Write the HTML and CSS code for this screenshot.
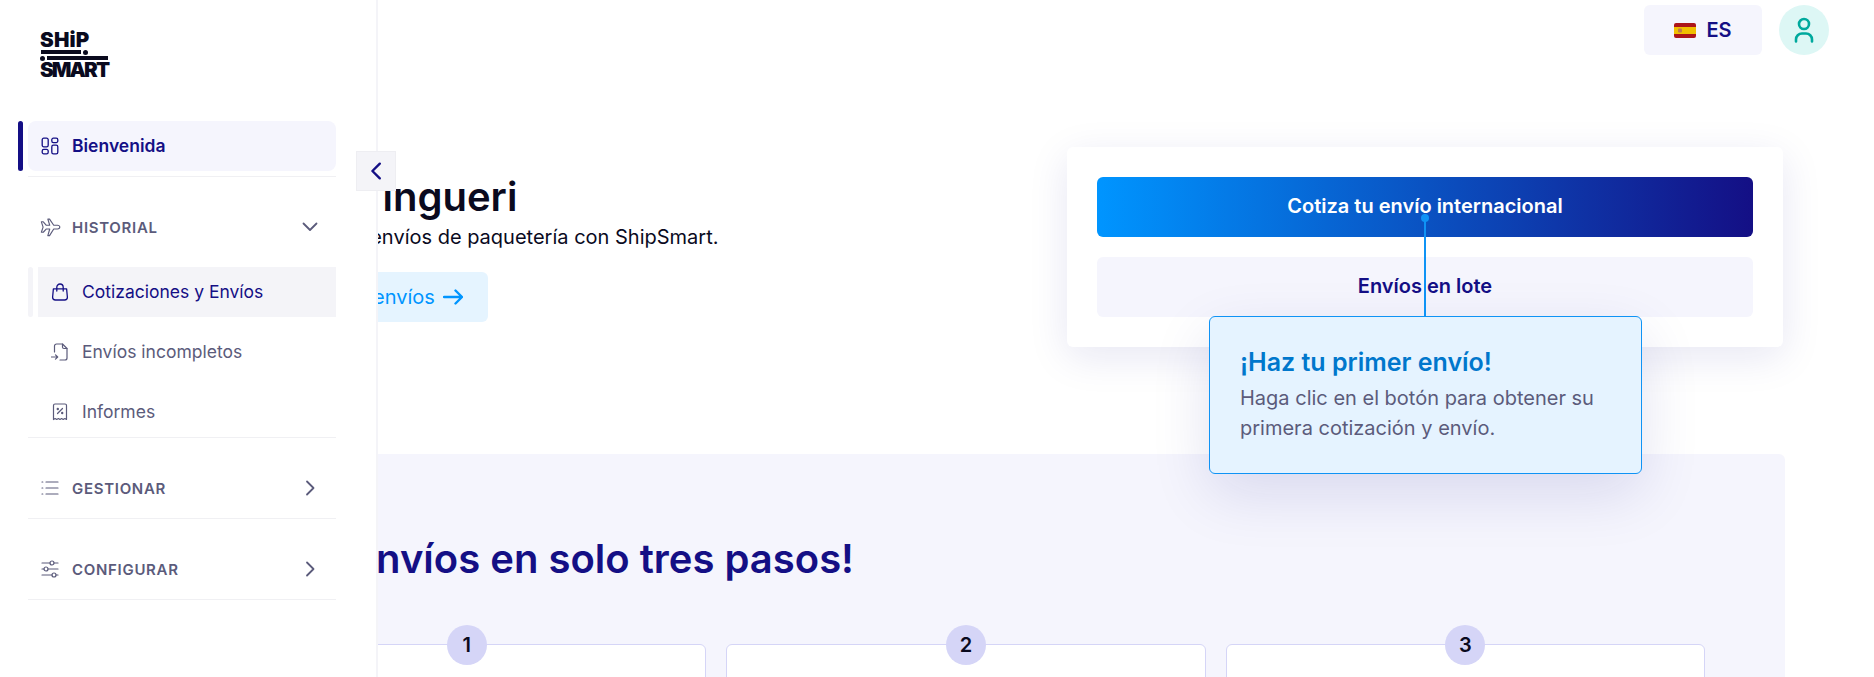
FILE: index.html
```html
<!DOCTYPE html>
<html lang="es">
<head>
<meta charset="utf-8">
<title>ShipSmart</title>
<link rel="stylesheet" href="styles.css">
</head>
<body>
<aside class="sidebar">
  <div class="logo">
    <span class="logo-word">SHiP</span>
    <div class="logo-rule logo-rule-top"><i class="bar"></i><i class="dot"></i></div>
    <div class="logo-rule logo-rule-bottom"><i class="dot"></i><i class="bar"></i></div>
    <span class="logo-word logo-word-wide">SMART</span>
  </div>
  <nav class="nav">
    <div class="row-top">
      <span class="marker marker-navy"></span>
      <a class="item item-home">
        <svg class="ico" viewBox="0 0 18 18" fill="none" stroke="currentColor" stroke-width="1.3"><rect x="1.2" y="1.2" width="6" height="8.6" rx="1.6"/><rect x="1.2" y="12.4" width="6" height="4.4" rx="1.6"/><rect x="10.8" y="1.2" width="6" height="4.4" rx="1.6"/><rect x="10.8" y="8.2" width="6" height="8.6" rx="1.6"/></svg>
        <span>Bienvenida</span>
      </a>
    </div>
    <section class="group group-open">
      <div class="group-head">
        <svg class="ico-wide" viewBox="0 0 22 20" fill="none" stroke="currentColor" stroke-width="1.2" stroke-linejoin="round" stroke-linecap="round"><path d="M20.8 9.600c0-1-1-2-2.400-2h-4L10 1.200H8.200l2 6.400H6.400L3.400 4h-2l1.800 5.600L1.400 15h2l3-3.400h3.800l-2 7h1.800l4.400-7h4c1.400 0 2.400-.8 2.400-2z"/></svg>
        <span class="group-label">HISTORIAL</span>
        <svg class="chev" viewBox="0 0 16 16" fill="none" stroke="currentColor" stroke-width="1.800" stroke-linecap="round" stroke-linejoin="round"><path d="M1.500 4.500 8 11l6.500-6.500"/></svg>
      </div>
      <div class="sub">
        <div class="row-sub">
          <span class="marker marker-soft"></span>
          <a class="item item-current">
            <svg class="ico" viewBox="0 0 18 18" fill="none" stroke="currentColor" stroke-width="1.300" stroke-linecap="round" stroke-linejoin="round"><path d="M2.400 5.800h13.200l.8 8.400a2.800 2.800 0 0 1-2.800 2.800H4.400a2.800 2.800 0 0 1-2.800-2.800z"/><path d="M5.800 8V4.200a3.200 3.200 0 0 1 6.400 0V8"/></svg>
            <span>Cotizaciones y Envíos</span>
          </a>
        </div>
        <a class="item item-plain">
          <svg class="ico" viewBox="0 0 18 18" fill="none" stroke="currentColor" stroke-width="1.200" stroke-linecap="round" stroke-linejoin="round"><path d="M3.500 9V3a2 2 0 0 1 2-2h6l4.500 4.500V15a2 2 0 0 1-2 2H9"/><path d="M11.500 1v3a1.500 1.500 0 0 0 1.500 1.500h3"/><path d="M.5 14h6M4.500 11.800 6.700 14l-2.200 2.200"/></svg>
          <span>Envíos incompletos</span>
        </a>
        <a class="item item-plain">
          <svg class="ico" viewBox="0 0 18 18" fill="none" stroke="currentColor" stroke-width="1.200" stroke-linecap="round" stroke-linejoin="round"><path d="M2.500 16.500V2.500a1.500 1.500 0 0 1 1.500-1.500h10a1.500 1.500 0 0 1 1.500 1.500v14l-1.600-1-1.700 1-1.600-1-1.600 1-1.600-1-1.700 1-1.600-1z"/><path d="m6.500 10.500 5-5"/><circle cx="6.800" cy="6" r=".6"/><circle cx="11.200" cy="10" r=".6"/></svg>
          <span>Informes</span>
        </a>
      </div>
    </section>
    <section class="group">
      <div class="group-head">
        <svg class="ico" viewBox="0 0 18 18" fill="none" stroke="currentColor" stroke-width="1.200" stroke-linecap="round"><path d="M5 3h12M5 9h12M5 15h12"/><path d="M1 3h.8M1 9h.8M1 15h.8"/></svg>
        <span class="group-label">GESTIONAR</span>
        <svg class="chev" viewBox="0 0 16 16" fill="none" stroke="currentColor" stroke-width="1.800" stroke-linecap="round" stroke-linejoin="round"><path d="m5 1.500 6.500 6.500L5 14.500"/></svg>
      </div>
    </section>
    <section class="group">
      <div class="group-head">
        <svg class="ico" viewBox="0 0 18 18" fill="none" stroke="currentColor" stroke-width="1.200" stroke-linecap="round"><path d="M1 3h8M13 3h4M1 9h2M7 9h10M1 15h10M15 15h2"/><circle cx="11" cy="3" r="2"/><circle cx="5" cy="9" r="2"/><circle cx="13" cy="15" r="2"/></svg>
        <span class="group-label">CONFIGURAR</span>
        <svg class="chev" viewBox="0 0 16 16" fill="none" stroke="currentColor" stroke-width="1.800" stroke-linecap="round" stroke-linejoin="round"><path d="m5 1.500 6.500 6.500L5 14.500"/></svg>
      </div>
    </section>
  </nav>
  <button class="collapse" type="button" aria-label="Contraer">
    <svg viewBox="0 0 12 18" width="12" height="18" fill="none" stroke="currentColor" stroke-width="2.400" stroke-linecap="round" stroke-linejoin="round"><path d="M9.800 1.700 2.400 9l7.400 7.300"/></svg>
  </button>
</aside>

<div class="page">
  <header class="topbar">
    <button class="lang" type="button">
      <svg class="flag" viewBox="0 0 22 15"><rect width="22" height="15" rx="2" fill="#ad1519"/><rect y="4" width="22" height="7" fill="#f1bf00"/><rect x="4" y="5.500" width="4" height="4" rx="1" fill="#c1794a"/></svg>
      <span>ES</span>
    </button>
    <span class="avatar">
      <svg viewBox="0 0 20 26" width="20" height="26" fill="none" stroke="currentColor" stroke-width="2.600" stroke-linecap="round"><circle cx="10" cy="7" r="5"/><path d="M2 24.500v-2a6 6 0 0 1 6-6h4a6 6 0 0 1 6 6v2"/></svg>
    </span>
  </header>

  <main class="content">
    <section class="hero">
      <div class="hero-text">
        <h1 class="hero-title">¡Hola, Ana Tingueri</h1>
        <p class="hero-sub">Realiza y gestiona tus envíos de paquetería con ShipSmart.</p>
        <a class="hero-link">Ver historial de envíos
          <svg viewBox="0 0 20 16" width="20" height="16" fill="none" stroke="currentColor" stroke-width="2.400" stroke-linecap="round" stroke-linejoin="round"><path d="M1 8h18M12.500 1.500 19 8l-6.500 6.500"/></svg>
        </a>
      </div>
      <div class="quote-card">
        <a class="btn btn-primary">Cotiza tu envío internacional</a>
        <a class="btn btn-soft">Envíos en lote</a>
        <div class="tip">
          <i class="tip-line"></i>
          <h3 class="tip-title">¡Haz tu primer envío!</h3>
          <p class="tip-text">Haga clic en el botón para obtener su primera cotización y envío.</p>
        </div>
      </div>
    </section>
    <section class="steps">
      <h2 class="steps-title">¡Crea envíos en solo tres pasos!</h2>
      <div class="steps-grid">
        <div class="step"><span class="step-num">1</span></div>
        <div class="step"><span class="step-num">2</span></div>
        <div class="step"><span class="step-num">3</span></div>
      </div>
    </section>
  </main>
</div>
</body>
</html>
```
FILE: styles.css
```css
* { box-sizing: border-box; }
html, body { margin: 0; height: 677px; overflow: hidden; background: #fff; }
body { font-family: Inter, "Liberation Sans", sans-serif; color: #0a0a1e; position: relative; }
a { text-decoration: none; }
button { font-family: inherit; border: 0; padding: 0; }

/* Sidebar overlays the page */
.sidebar {
  position: absolute; left: 0; top: 0; z-index: 5;
  width: 378px; height: 677px;
  background: #fff; border-right: 2px solid #f4f4f8;
  padding: 32px 40px 0 18px;
}
.logo { margin-left: 22px; width: 68px; height: 89px; display: flex; flex-direction: column; color: #0a0a1e; }
.logo-word { font-weight: 900; font-size: 20.6px; line-height: 16px; height: 16px; letter-spacing: .2px; white-space: nowrap; }
.logo-word-wide { letter-spacing: -1.9px; margin-top: 2px; }
.logo-rule { display: flex; align-items: center; height: 4px; gap: 2px; margin-top: 2px; }
.logo-rule-top { margin-left: 1px; width: 47px; }
.logo-rule .bar { flex: 1; height: 4px; background: #0a0a1e; }
.logo-rule .dot { width: 5px; height: 5px; border-radius: 50%; background: #0a0a1e; }

.nav { display: flex; flex-direction: column; }
.row-top { display: flex; gap: 5px; height: 50px; }
.row-sub { display: flex; gap: 5px; height: 50px; }
.marker { width: 5px; border-radius: 3px; flex: none; }
.marker-navy { background: #140f85; }
.marker-soft { background: #f4f4f8; }
.item { display: flex; align-items: center; flex: 1; height: 50px; font-size: 17.5px; gap: 13px; padding-left: 13px; }
.item span { margin-bottom: 2px; }
.item-home { background: #f5f5fd; color: #140f85; border-radius: 8px; font-weight: 600; }
.item-current { background: #f4f4f8; color: #140f85; }
.item-plain { color: #5b5b7b; padding-left: 23px; flex: none; }
.ico { width: 18px; height: 18px; flex: none; }

.group { margin-left: 10px; padding: 25px 0 5px; border-bottom: 1px solid #f0f0f3; }
.group-open { margin-top: 5px; border-top: 1px solid #f0f0f3; padding-bottom: 0; }
.group-head { display: flex; align-items: center; height: 50px; color: #5b5b7b; padding-left: 13px; }
.group-head .ico { margin-right: 13px; }
.ico-wide { width: 21px; height: 19px; margin-left: -1px; margin-right: 11px; flex: none; }
.group-label { font-size: 15px; font-weight: 600; letter-spacing: .7px; flex: 1; }
.chev { width: 16px; height: 16px; margin-right: 18px; flex: none; }
.sub { display: flex; flex-direction: column; gap: 10px; margin-top: 15px; }

.collapse {
  position: absolute; left: 356px; top: 151px;
  width: 40px; height: 40px;
  display: flex; align-items: center; justify-content: center;
  background: #f4f4f8; border: 1px solid #eeeef2; color: #140f85;
}

/* Page */
.page { display: flex; flex-direction: column; height: 677px; overflow: hidden; }
.topbar { display: flex; justify-content: flex-end; align-items: center; gap: 17px; padding: 5px 45px 0 0; height: 55px; flex: none; }
.lang { width: 118px; height: 50px; background: #f5f5fd; border-radius: 6px; display: flex; align-items: center; justify-content: center; gap: 10px; color: #140f85; font-size: 20px; font-weight: 600; }
.flag { width: 22px; height: 15px; }
.avatar { width: 50px; height: 50px; border-radius: 50%; background: #ddf7f5; color: #00a99d; display: flex; align-items: center; justify-content: center; }

.content { padding: 0 89px 0 148px; flex: 1; }
.hero { display: flex; justify-content: space-between; margin: 92px 2px 0 0; height: 200px; }
.hero-text { padding-top: 26px; }
.hero-title { margin: 0 0 0 -1px; font-size: 40px; line-height: 48px; font-weight: 600; color: #0a0a1e; white-space: nowrap; }
.hero-sub { margin: 2px 0 0 11px; font-size: 20px; line-height: 28px; color: #0a0a1e; white-space: nowrap; }
.hero-link { display: flex; width: fit-content; align-items: center; gap: 8px; height: 50px; margin-top: 21px; padding: 0 25px 0 78px; background: #e5f4ff; border-radius: 6px; color: #0095ff; font-size: 20px; white-space: nowrap; }

.quote-card { position: relative; width: 716px; height: 200px; background: #fff; border-radius: 6px; padding: 30px; display: flex; flex-direction: column; gap: 20px; box-shadow: 0 10px 40px rgba(20, 15, 133, .1); }
.btn { height: 60px; border-radius: 6px; display: flex; align-items: center; justify-content: center; font-size: 20px; font-weight: 600; padding-bottom: 2px; }
.btn-primary { background: linear-gradient(90deg, #0095ff, #140f85); color: #fff; }
.btn-soft { background: #f5f5fd; color: #140f85; }

.tip { position: absolute; left: 142px; top: 169px; width: 433px; height: 158px; padding: 29px 30px; background: #e5f3ff; border: 1px solid #0f93f5; border-radius: 6px; box-shadow: 0 20px 60px rgba(20, 15, 133, .12); z-index: 2; }
.tip-line { position: absolute; left: 214px; top: -103px; width: 2px; height: 103px; background: #0f93f5; }
.tip-line::before { content: ""; position: absolute; left: -3px; top: 0; width: 8px; height: 8px; border-radius: 50%; background: #0f93f5; }
.tip-title { margin: 0; font-size: 25px; line-height: 32px; font-weight: 600; color: #0077cc; }
.tip-text { margin: 5px 0 0; font-size: 20px; line-height: 30px; color: #5b5b7b; }

.steps { margin-top: 107px; height: 300px; background: #f5f5fd; border-radius: 6px; padding: 81px 80px 0 79px; }
.steps-title { margin: 0 0 0 11px; font-size: 40px; line-height: 48px; font-weight: 600; color: #140f85; white-space: nowrap; }
.steps-grid { display: grid; grid-template-columns: repeat(3, 1fr); gap: 20px; margin-top: 61px; }
.step { position: relative; height: 200px; background: #fff; border: 1px solid #d5d5f7; border-radius: 6px; display: flex; justify-content: center; }
.step-num { position: absolute; top: -20px; width: 40px; height: 40px; border-radius: 50%; background: #d5d5f7; color: #0a0a1e; display: flex; align-items: center; justify-content: center; font-size: 20px; font-weight: 600; }
```
